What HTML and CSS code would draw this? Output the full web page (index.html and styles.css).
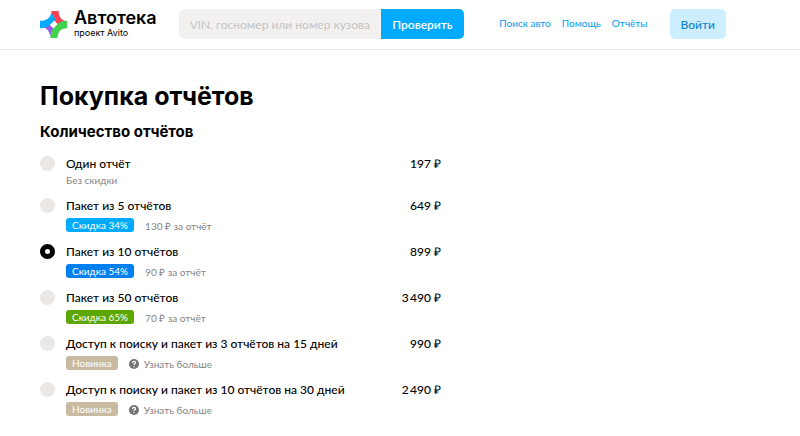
FILE: index.html
```html
<!DOCTYPE html>
<html lang="ru">
<head>
  <meta charset="UTF-8">
  <meta name="viewport" content="width=device-width, initial-scale=1.0">
  <title>Покупка отчётов</title>
  <link rel="stylesheet" href="styles.css">
</head>
<body>
  <header class="header">
    <a class="logo" href="#">
      <svg class="logo-icon" viewBox="0 0 26 26" aria-hidden="true">
        <path fill="#965eeb" d="M4 16C7 17 9 20 10 24.500C10.500 21 12 18.500 13.500 16.500L9.500 13Z"/>
        <path fill="#ff4053" d="M11 0H18C18 5 20 8 24 9.700C21 10.300 19 11.500 17 13L12 8Z"/>
        <path fill="#0af" d="M0 9.500C7 9.500 11 6 11 0C11.500 3 13 5.500 15 7.500C12 13 7 16.500 0 16.500Z"/>
        <path fill="#3fd34b" d="M26 9.500V16.500C20 16.500 17 20 17 26H10C10 17 17 9.500 26 9.500Z"/>
        <path fill="#fff" d="M14 9.200L16.800 12.700L13 16.800L9.500 13.500Z"/>
      </svg>
      <span class="logo-text">
        <span class="logo-name">Автотека</span>
        <span class="logo-sub">проект Avito</span>
      </span>
    </a>
    <form class="search">
      <input class="search-input" type="text" aria-label="VIN, госномер или номер кузова" placeholder="VIN, госномер или номер кузова">
      <button class="search-button" type="button">Проверить</button>
    </form>
    <nav class="nav">
      <a href="#">Поиск авто</a>
      <a href="#">Помощь</a>
      <a href="#">Отчёты</a>
    </nav>
    <button class="login" type="button">Войти</button>
  </header>

  <main class="main">
    <h1>Покупка отчётов</h1>
    <h2>Количество отчётов</h2>
    <form class="packages">
      <div class="package">
        <input type="radio" id="p1" name="package">
        <div class="info">
          <label for="p1">Один отчёт</label>
          <div class="details"><span class="note">Без скидки</span></div>
        </div>
        <span class="price">197 ₽</span>
      </div>
      <div class="package">
        <input type="radio" id="p5" name="package">
        <div class="info">
          <label for="p5">Пакет из 5 отчётов</label>
          <div class="details"><span class="badge badge-light">Скидка 34%</span><span class="note">130 ₽ за отчёт</span></div>
        </div>
        <span class="price">649 ₽</span>
      </div>
      <div class="package">
        <input type="radio" id="p10" name="package" checked>
        <div class="info">
          <label for="p10">Пакет из 10 отчётов</label>
          <div class="details"><span class="badge badge-blue">Скидка 54%</span><span class="note">90 ₽ за отчёт</span></div>
        </div>
        <span class="price">899 ₽</span>
      </div>
      <div class="package">
        <input type="radio" id="p50" name="package">
        <div class="info">
          <label for="p50">Пакет из 50 отчётов</label>
          <div class="details"><span class="badge badge-green">Скидка 65%</span><span class="note">70 ₽ за отчёт</span></div>
        </div>
        <span class="price">3&#8201;490 ₽</span>
      </div>
      <div class="package">
        <input type="radio" id="s3" name="package">
        <div class="info">
          <label for="s3">Доступ к поиску и пакет из 3 отчётов на 15 дней</label>
          <div class="details">
            <span class="badge badge-new">Новинка</span>
            <a class="more" href="#">
              <svg viewBox="0 0 10 10" aria-hidden="true"><circle cx="5" cy="5" r="5" fill="#757575"/><path d="M3.500 4C3.500 1.800 6.500 1.800 6.500 3.800C6.500 4.800 5 4.900 5 6" fill="none" stroke="#fff" stroke-width="1.200"/><circle cx="5" cy="7.600" r=".7" fill="#fff"/></svg>
              Узнать больше
            </a>
          </div>
        </div>
        <span class="price">990 ₽</span>
      </div>
      <div class="package">
        <input type="radio" id="s10" name="package">
        <div class="info">
          <label for="s10">Доступ к поиску и пакет из 10 отчётов на 30 дней</label>
          <div class="details">
            <span class="badge badge-new">Новинка</span>
            <a class="more" href="#">
              <svg viewBox="0 0 10 10" aria-hidden="true"><circle cx="5" cy="5" r="5" fill="#757575"/><path d="M3.500 4C3.500 1.800 6.500 1.800 6.500 3.800C6.500 4.800 5 4.900 5 6" fill="none" stroke="#fff" stroke-width="1.200"/><circle cx="5" cy="7.600" r=".7" fill="#fff"/></svg>
              Узнать больше
            </a>
          </div>
        </div>
        <span class="price">2&#8201;490 ₽</span>
      </div>
    </form>
  </main>
</body>
</html>
```
FILE: styles.css
```css
* {
  box-sizing: border-box;
}

body {
  margin: 0;
  background: #fff;
  color: #000;
  font-family: Lato, "Open Sans", sans-serif;
  font-size: 12px;
}

a {
  text-decoration: none;
}

button,
input {
  font-family: inherit;
}

.header {
  display: flex;
  align-items: center;
  padding: 9px 74px 10px 40px;
  border-bottom: 1px solid #ebebeb;
}

.logo {
  display: flex;
  align-items: center;
  gap: 7px;
  color: #000;
}

.logo-icon {
  width: 27px;
  height: 27px;
}

.logo-text {
  display: flex;
  flex-direction: column;
}

.logo-name {
  font-family: Inter, sans-serif;
  font-size: 18px;
  font-weight: 600;
  line-height: 18px;
}

.logo-sub {
  font-family: Inter, sans-serif;
  font-size: 9px;
  line-height: 12px;
}

.search {
  display: flex;
  flex: 1;
  max-width: 285px;
  margin-left: 22px;
}

.search-input {
  flex: 1;
  min-width: 0;
  height: 30px;
  padding: 0 11px;
  border: none;
  border-radius: 5px 0 0 5px;
  background: #f2f1f0;
  font-size: 12px;
}

.search-input::placeholder {
  color: #c4c4c4;
}

.search-button {
  height: 30px;
  padding: 0 11px;
  border: none;
  border-radius: 0 5px 5px 0;
  background: #0af;
  color: #fff;
  font-size: 12px;
  font-weight: 600;
}

.nav {
  display: flex;
  gap: 11px;
  margin-left: auto;
  padding-bottom: 2px;
}

.nav a {
  color: #009cf0;
  font-size: 10px;
}

.login {
  height: 30px;
  margin-left: 22px;
  padding: 0 11px;
  border: none;
  border-radius: 5px;
  background: #cceeff;
  color: #0b84d0;
  font-size: 12px;
  font-weight: 500;
}

.main {
  padding: 30px 40px 10px;
}

h1,
h2 {
  margin: 0;
  font-family: Inter, sans-serif;
  font-weight: 700;
}

h1 {
  font-size: 25px;
  line-height: 32px;
}

h2 {
  margin: 10px 0 12px;
  font-size: 15px;
  line-height: 20px;
}

.packages {
  max-width: 401px;
}

.package {
  display: flex;
  align-items: flex-start;
  margin-bottom: 10px;
}

.package input {
  flex: none;
  appearance: none;
  width: 15px;
  height: 15px;
  margin: 2px 11px 0 0;
  border-radius: 50%;
  background: #e9e8e7;
}

.package input:checked {
  border: 5px solid #000;
  background: #fff;
}

.info {
  flex: 1;
}

.info label,
.price {
  display: block;
  font-size: 12px;
  font-weight: 500;
  line-height: 20px;
}

.details {
  display: flex;
  align-items: flex-end;
  color: #858585;
  font-size: 10px;
  line-height: 12px;
}

.badge {
  margin: 2px 11px 0 0;
  padding: 0 6px;
  border-radius: 3px;
  color: #fff;
  line-height: 14px;
}

.badge-light {
  background: #0af;
}

.badge-blue {
  background: #0080f0;
}

.badge-green {
  background: #5ba600;
}

.badge-new {
  background: #c9b9a0;
}

.more {
  display: flex;
  align-items: center;
  gap: 5px;
  color: #858585;
}

.more svg {
  width: 10px;
  height: 10px;
}
```
